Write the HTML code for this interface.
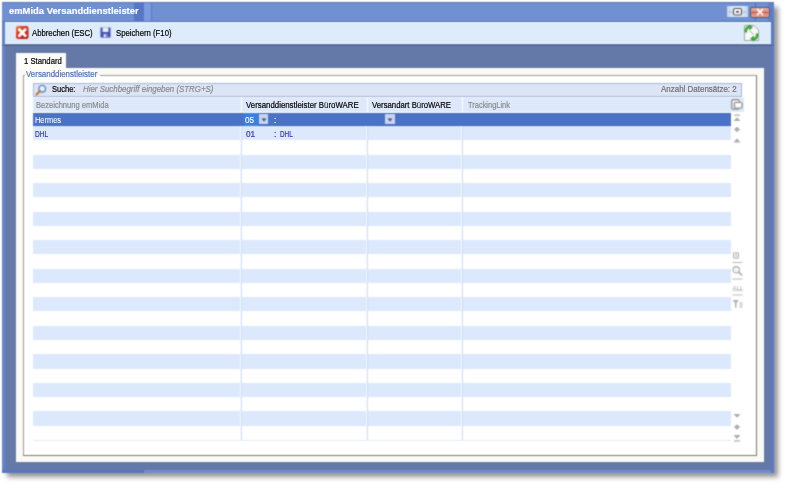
<!DOCTYPE html>
<html><head><meta charset="utf-8">
<style>
*{margin:0;padding:0;box-sizing:border-box}
html,body{width:785px;height:484px;overflow:hidden;background:#fff;font-family:"Liberation Sans",sans-serif;font-size:8.5px;color:#222}
.a{position:absolute;display:block}
.t{position:absolute;white-space:nowrap;line-height:1;transform-origin:0 0;-webkit-text-stroke:0.2px currentColor}
</style></head><body><svg width="0" height="0" style="position:absolute"><filter id="bl" x="0" y="0" width="100%" height="100%" color-interpolation-filters="sRGB"><feConvolveMatrix order="3" kernelMatrix="1 2 1 2 8 2 1 2 1" divisor="20" edgeMode="duplicate"/></filter></svg><div style="position:absolute;left:0;top:0;width:785px;height:484px;background:#fff;filter:url(#bl)">
<div class="a" style="left:7px;top:7px;width:771px;height:470px;background:#808080;filter:blur(2.5px);opacity:.85"></div>
<div class="a" style="left:2px;top:2px;width:772px;height:471px;background:#6479a7;"></div>
<div class="a" style="left:2px;top:2px;width:2.5px;height:471px;background:#6484c8;"></div>
<div class="a" style="left:2px;top:469.5px;width:142px;height:3.5px;background:#5477c4;"></div>
<div class="a" style="left:144px;top:469.5px;width:627px;height:3.5px;background:#6e8ed0;"></div>
<div class="a" style="left:771px;top:2px;width:3px;height:471px;background:#5a7ac8;"></div>
<div class="a" style="left:2px;top:2px;width:772px;height:19px;background:#7090d2;"></div>
<div class="a" style="left:2px;top:2px;width:772px;height:1px;background:#5a76b4;"></div>
<div class="a" style="left:2px;top:20.5px;width:772px;height:1px;background:#5872aa;"></div>
<div class="a" style="left:134px;top:3px;width:10px;height:17.5px;background:#5677c6;"></div>
<div class="a" style="left:144px;top:3px;width:7px;height:17.5px;background:#7c9be0;"></div>
<div class="a" style="left:151px;top:3px;width:1px;height:17.5px;background:#5a78c0;"></div>
<div class="a" style="left:755px;top:3px;width:1px;height:17.5px;background:#5670b8;"></div>
<div class="a" style="left:768px;top:3px;width:6px;height:17.5px;background:#5e80cc;"></div>
<div class="a" style="left:727px;top:6px;width:21px;height:11px;background:linear-gradient(90deg,#c0d4f0,#dde9f8 30%,#dde9f8 70%,#c0d4f0)"></div>
<svg class="a" style="left:727px;top:6px" width="21" height="11" viewBox="0 0 21 11"><line x1="2" y1="6" x2="5" y2="6" stroke="#a8b0c0" stroke-width="1"/><line x1="16" y1="6" x2="19" y2="6" stroke="#a8b0c0" stroke-width="1"/><rect x="6.5" y="2.5" width="8" height="6.5" rx="1.5" fill="#fafafa" stroke="#505050" stroke-width="1.1"/><rect x="9" y="5" width="3" height="1.5" fill="#444"/></svg>
<div class="a" style="left:750px;top:6.5px;width:20px;height:11px;background:linear-gradient(#ebb4a6,#d9806f 50%,#e2a494);border:1px solid #505a78;border-radius:2px"></div>
<svg class="a" style="left:750px;top:6px" width="20" height="12" viewBox="0 0 20 12"><line x1="2" y1="6.5" x2="18" y2="6.5" stroke="#c83a2a" stroke-width="1" stroke-dasharray="1.5 1"/><path d="M7.6 3.6 L12.4 8.2 M12.4 3.6 L7.6 8.2" stroke="#fff" stroke-width="1.7" stroke-linecap="square"/></svg>
<div class="a" style="left:5px;top:21.5px;width:766px;height:22.5px;background:#ddebfb;"></div>
<div class="a" style="left:5px;top:22px;width:766px;height:1px;background:#f0f8ff;"></div>
<div class="a" style="left:5px;top:43px;width:766px;height:1px;background:#f0f8ff;"></div>
<div class="a" style="left:2px;top:44.5px;width:772px;height:1.3px;background:#4e6494;"></div>
<svg class="a" style="left:15px;top:25px" width="15" height="15" viewBox="0 0 15 15"><defs><linearGradient id="cg" x1="0" y1="0" x2="1" y2="1"><stop offset="0" stop-color="#f07838"/><stop offset=".45" stop-color="#d83220"/><stop offset="1" stop-color="#a81a10"/></linearGradient></defs><rect x="1" y="1" width="12.5" height="13" rx="2" fill="url(#cg)"/><path d="M4.3 4.5 L10.3 10.8 M10.3 4.5 L4.3 10.8" stroke="#fff" stroke-width="2.8" stroke-linecap="round"/></svg>
<svg class="a" style="left:100px;top:27px" width="12" height="11" viewBox="0 0 12 11"><path d="M0.5 0.5 H10.5 V10.5 H0.5 Z" fill="#3c4ca4"/><rect x="2.5" y="0.5" width="6" height="4.5" fill="#e8ecf8"/><rect x="3" y="6.5" width="5" height="4" fill="#7888d0"/><rect x="4" y="7.5" width="1.5" height="2.5" fill="#fff"/></svg>
<svg class="a" style="left:743px;top:24px" width="17" height="18" viewBox="0 0 17 18"><path d="M1.5 1.5 H11 L15.5 6 V16.5 H1.5 Z" fill="#f8f8f8" stroke="#a8a8a8" stroke-width="1"/><path d="M7 7 L10.5 10.5" stroke="#a0a0a0" stroke-width="1"/><path d="M2.8 8.5 Q2.5 3 7 2.8" fill="none" stroke="#3aa53a" stroke-width="2.6"/><path d="M6 0.3 L10 3.2 L6 6.5 Z" fill="#3aa53a"/><path d="M14.2 9.5 Q14.5 15 10 15.2" fill="none" stroke="#3aa53a" stroke-width="2.6"/><path d="M11 11.5 L7 14.8 L11 17.7 Z" fill="#3aa53a"/></svg>
<div class="a" style="left:16px;top:53px;width:50px;height:15px;background:#fdfcf8;"></div>
<div class="a" style="left:16px;top:53px;width:50px;height:1px;background:#ffffff;"></div>
<div class="a" style="left:16px;top:68px;width:747.5px;height:393.5px;background:#faf9f4;"></div>
<div class="a" style="left:762.5px;top:68px;width:1px;height:393.5px;background:#ffffff;"></div>
<div class="a" style="left:16px;top:461px;width:748px;height:1px;background:#ffffff;"></div>
<div class="a" style="left:16px;top:68px;width:1px;height:393.5px;background:#ffffff;"></div>
<div class="a" style="left:16px;top:68px;width:748px;height:1px;background:#fdfdfb;"></div>
<div class="a" style="left:22.5px;top:75px;width:734px;height:381px;border:1.3px solid;border-color:#a09b92 #7c7870 #7c7870 #a09b92;background:#ffffff"></div>
<div class="a" style="left:25px;top:70px;width:75px;height:6px;background:#faf9f4;"></div>
<div class="a" style="left:33px;top:82.5px;width:709px;height:14.5px;background:#dbe5f5;border:1px solid #a8b6d4"></div>
<svg class="a" style="left:35px;top:84px" width="12" height="12" viewBox="0 0 12 12"><circle cx="7.2" cy="4.8" r="3.3" fill="#e8f4fc" stroke="#4a7ab8" stroke-width="1.2"/><path d="M5 7 L1.5 10.5" stroke="#c07830" stroke-width="2.2" stroke-linecap="round"/></svg>
<div class="a" style="left:33px;top:97px;width:710.5px;height:15px;background:#dde9fa;"></div>
<div class="a" style="left:33px;top:97px;width:710.5px;height:1px;background:#f2f7ff;"></div>
<div class="a" style="left:33px;top:113px;width:698px;height:12.97px;background:#4a72c6;"></div>
<div class="a" style="left:33px;top:113px;width:698px;height:1px;background:#4068b8;"></div>
<div class="a" style="left:33px;top:124.97px;width:698px;height:1px;background:#3f66b6;"></div>
<div class="a" style="left:33px;top:125.97px;width:698px;height:14.27px;background:#dce8fb;"></div>
<div class="a" style="left:33px;top:140.24px;width:698px;height:14.27px;background:#ffffff;"></div>
<div class="a" style="left:33px;top:154.51px;width:698px;height:14.27px;background:#dce8fb;"></div>
<div class="a" style="left:33px;top:168.78px;width:698px;height:14.27px;background:#ffffff;"></div>
<div class="a" style="left:33px;top:183.05px;width:698px;height:14.27px;background:#dce8fb;"></div>
<div class="a" style="left:33px;top:197.32px;width:698px;height:14.27px;background:#ffffff;"></div>
<div class="a" style="left:33px;top:211.59px;width:698px;height:14.27px;background:#dce8fb;"></div>
<div class="a" style="left:33px;top:225.86px;width:698px;height:14.27px;background:#ffffff;"></div>
<div class="a" style="left:33px;top:240.13px;width:698px;height:14.27px;background:#dce8fb;"></div>
<div class="a" style="left:33px;top:254.4px;width:698px;height:14.27px;background:#ffffff;"></div>
<div class="a" style="left:33px;top:268.67px;width:698px;height:14.27px;background:#dce8fb;"></div>
<div class="a" style="left:33px;top:282.94px;width:698px;height:14.27px;background:#ffffff;"></div>
<div class="a" style="left:33px;top:297.21px;width:698px;height:14.27px;background:#dce8fb;"></div>
<div class="a" style="left:33px;top:311.48px;width:698px;height:14.27px;background:#ffffff;"></div>
<div class="a" style="left:33px;top:325.75px;width:698px;height:14.27px;background:#dce8fb;"></div>
<div class="a" style="left:33px;top:340.02px;width:698px;height:14.27px;background:#ffffff;"></div>
<div class="a" style="left:33px;top:354.29px;width:698px;height:14.27px;background:#dce8fb;"></div>
<div class="a" style="left:33px;top:368.56px;width:698px;height:14.27px;background:#ffffff;"></div>
<div class="a" style="left:33px;top:382.83px;width:698px;height:14.27px;background:#dce8fb;"></div>
<div class="a" style="left:33px;top:397.1px;width:698px;height:14.27px;background:#ffffff;"></div>
<div class="a" style="left:33px;top:411.37px;width:698px;height:14.27px;background:#dce8fb;"></div>
<div class="a" style="left:33px;top:425.64px;width:698px;height:14.27px;background:#ffffff;"></div>
<div class="a" style="left:240.5px;top:97px;width:1.5px;height:15px;background:#ffffff;"></div>
<div class="a" style="left:240px;top:125.97px;width:1px;height:313.94px;background:#f4f8ff;"></div>
<div class="a" style="left:241px;top:125.97px;width:1px;height:313.94px;background:#cfdef7;"></div>
<div class="a" style="left:366.5px;top:97px;width:1.5px;height:15px;background:#ffffff;"></div>
<div class="a" style="left:366px;top:125.97px;width:1px;height:313.94px;background:#f4f8ff;"></div>
<div class="a" style="left:367px;top:125.97px;width:1px;height:313.94px;background:#cfdef7;"></div>
<div class="a" style="left:461.5px;top:97px;width:1.5px;height:15px;background:#ffffff;"></div>
<div class="a" style="left:461px;top:125.97px;width:1px;height:313.94px;background:#f4f8ff;"></div>
<div class="a" style="left:462px;top:125.97px;width:1px;height:313.94px;background:#cfdef7;"></div>
<div class="a" style="left:33px;top:439.5px;width:698px;height:1px;background:#e8ecf2;"></div>
<div class="a" style="left:244px;top:113px;width:14px;height:12.5px;background:#3b7fe0;"></div>
<div class="a" style="left:258.5px;top:113.5px;width:9.5px;height:10.5px;background:#c9d5f2;"></div>
<svg class="a" style="left:258.5px;top:113.5px" width="10" height="11" viewBox="0 0 10 11"><path d="M2.5 4.5 H7.5 L5 7.5 Z" fill="#3a4a80"/></svg>
<div class="a" style="left:385px;top:113.5px;width:9.5px;height:10.5px;background:#c9d5f2;"></div>
<svg class="a" style="left:385px;top:113.5px" width="10" height="11" viewBox="0 0 10 11"><path d="M2.5 4.5 H7.5 L5 7.5 Z" fill="#3a4a80"/></svg>
<svg class="a" style="left:731px;top:99px" width="12" height="12" viewBox="0 0 12 12"><rect x="0.7" y="0.7" width="7.5" height="9.5" rx="1.5" fill="#f0f0f0" stroke="#8a8a8a" stroke-width="1.2"/><rect x="3.5" y="3.5" width="7.5" height="5.5" rx="1" fill="#fff" stroke="#8a8a8a" stroke-width="1.2"/></svg>
<svg class="a" style="left:731px;top:113px" width="12" height="32" viewBox="0 0 12 32"><rect x="3" y="1.5" width="6" height="1.2" fill="#acacac"/><path d="M2.5 8 L6 4.3 L9.5 8 Z" fill="#acacac"/><path d="M6 13.5 L9.5 17.2 L8 17.2 L6 19.2 L4 17.2 L2.5 17.2 Z" fill="#acacac"/><path d="M2.5 29.5 L6 25.3 L9.5 29.5 Z" fill="#acacac"/></svg>
<svg class="a" style="left:731px;top:248px" width="13" height="62" viewBox="0 0 13 62"><text x="1.5" y="8.5" font-family="Liberation Sans" font-size="7.5" font-weight="bold" fill="#a8a8a8">(|)</text><rect x="1.5" y="14" width="10" height="1" fill="#b8b8b8"/><circle cx="5.2" cy="21.8" r="3.2" fill="#f6f6f6" stroke="#aaaaaa" stroke-width="1.1"/><path d="M7.5 24 L11 27.3" stroke="#a8a8a8" stroke-width="1.7"/><rect x="1.5" y="30.5" width="10" height="1" fill="#b8b8b8"/><text x="1.5" y="41.5" font-family="Liberation Sans" font-size="6" fill="#aaaaaa">ALL</text><rect x="1.5" y="42.3" width="10" height="0.8" fill="#c0c0c0"/><rect x="1.5" y="46.5" width="10" height="1" fill="#b8b8b8"/><path d="M1.5 52 H8 L5.5 55 V59.5 H4 V55 Z" fill="#b0b0b0"/><rect x="8.5" y="54.5" width="3" height="1" fill="#b0b0b0"/><rect x="8.5" y="56.5" width="3" height="1" fill="#b0b0b0"/><rect x="8.5" y="58.5" width="3" height="1" fill="#b0b0b0"/></svg>
<svg class="a" style="left:731px;top:410px" width="12" height="34" viewBox="0 0 12 34"><path d="M2.5 4 L9.5 4 L6 7.7 Z" fill="#acacac"/><path d="M6 14.3 L8 16.3 L9.5 16.3 L6 20 L2.5 16.3 L4 16.3 Z" fill="#acacac"/><path d="M2.5 25 L9.5 25 L6 29 Z" fill="#acacac"/><rect x="3" y="30.3" width="6" height="1.2" fill="#acacac"/></svg>
</div>
<div class="a" style="left:0;top:0;width:785px;height:484px"><div class="t" style="left:8.6px;top:5.50px;font-size:9.8px;color:#fff;transform:scaleX(0.96);font-weight:bold;-webkit-text-stroke:0.15px #fff;">emMida Versanddienstleister</div>
<div class="t" style="left:31.5px;top:28.60px;font-size:8.5px;color:#000;transform:scaleX(0.911);">Abbrechen (ESC)</div>
<div class="t" style="left:115.7px;top:28.60px;font-size:8.5px;color:#000;transform:scaleX(0.911);">Speichern (F10)</div>
<div class="t" style="left:23.5px;top:56.60px;font-size:8.5px;color:#000;transform:scaleX(0.909);">1 Standard</div>
<div class="t" style="left:26px;top:70.20px;font-size:8.5px;color:#5272b6;transform:scaleX(0.931);">Versanddienstleister</div>
<div class="t" style="left:51.8px;top:84.80px;font-size:8.5px;color:#000;transform:scaleX(0.884);">Suche:</div>
<div class="t" style="left:82.5px;top:84.80px;font-size:8.5px;color:#8a8a8a;transform:scaleX(0.928);font-style:italic;">Hier Suchbegriff eingeben (STRG+S)</div>
<div class="t" style="left:660.8px;top:84.80px;font-size:8.5px;color:#707070;transform:scaleX(0.937);">Anzahl Datensätze: 2</div>
<div class="t" style="left:35.5px;top:100.50px;font-size:8.5px;color:#8a8a8a;transform:scaleX(0.888);">Bezeichnung emMida</div>
<div class="t" style="left:245.5px;top:100.50px;font-size:8.5px;color:#000;transform:scaleX(0.923);">Versanddienstleister B<span style="-webkit-text-stroke:0">ü</span>roWARE</div>
<div class="t" style="left:371.5px;top:100.50px;font-size:8.5px;color:#000;transform:scaleX(0.912);">Versandart B<span style="-webkit-text-stroke:0">ü</span>roWARE</div>
<div class="t" style="left:467.5px;top:100.50px;font-size:8.5px;color:#8a8a8a;transform:scaleX(0.877);">TrackingLink</div>
<div class="t" style="left:35.3px;top:115.50px;font-size:8.5px;color:#f4f7ff;transform:scaleX(0.873);-webkit-text-stroke:0.1px #fff;">Hermes</div>
<div class="t" style="left:35.3px;top:129.80px;font-size:8.5px;color:#3434c0;transform:scaleX(0.77);">DHL</div>
<div class="t" style="left:245.3px;top:115.50px;font-size:8.5px;color:#fff;transform:scaleX(0.97);-webkit-text-stroke:0.1px #fff;">05</div>
<div class="t" style="left:273.8px;top:115.50px;font-size:8.5px;color:#fff;transform:scaleX(0.99);">:</div>
<div class="t" style="left:246.3px;top:129.80px;font-size:8.5px;color:#3434c0;transform:scaleX(0.97);">01</div>
<div class="t" style="left:273.8px;top:129.80px;font-size:8.5px;color:#3434c0;transform:scaleX(0.99);">:</div>
<div class="t" style="left:279.5px;top:129.80px;font-size:8.5px;color:#3434c0;transform:scaleX(0.749);">DHL</div></div></body></html>
